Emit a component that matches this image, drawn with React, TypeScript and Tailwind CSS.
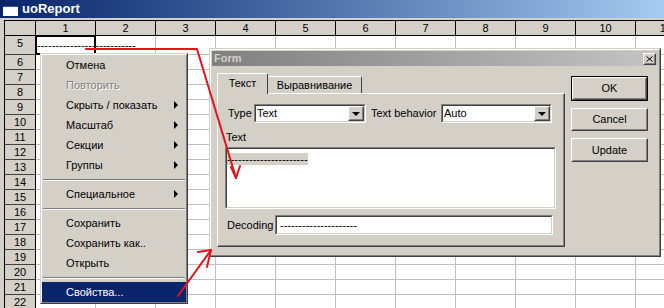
import React from "react";

const cols = [1, 2, 3, 4, 5, 6, 7, 8, 9, 10, 11];
const rows = Array.from({ length: 18 }, (_, i) => i + 5);

function Sunken({ className, children }: { className?: string; children?: React.ReactNode }) {
  return (
    <div className={"border border-t-[#808080] border-l-[#808080] border-r-white border-b-white " + (className ?? "")}>
      <div className="h-full w-full border border-t-[#404040] border-l-[#404040] border-r-[#d4d0c8] border-b-[#d4d0c8] bg-white">
        {children}
      </div>
    </div>
  );
}

function Raised({ className, children }: { className?: string; children?: React.ReactNode }) {
  return (
    <div className={"border border-t-white border-l-white border-r-[#404040] border-b-[#404040] " + (className ?? "")}>
      <div className="flex h-full w-full items-center justify-center border border-t-[#d4d0c8] border-l-[#d4d0c8] border-r-[#808080] border-b-[#808080] bg-[#d4d0c8]">
        {children}
      </div>
    </div>
  );
}

function Select({ value, className }: { value: string; className: string }) {
  return (
    <Sunken className={className}>
      <div className="flex h-full items-center">
        <span className="flex-1 pl-[1px] text-[11px] leading-[13px]">{value}</span>
        <Raised className="h-full w-[16px]">
          <span className="h-0 w-0 border-x-[4px] border-t-[4px] border-x-transparent border-t-black" />
        </Raised>
      </div>
    </Sunken>
  );
}

function MenuItem({ label, arrow, disabled, active }: { label: string; arrow?: boolean; disabled?: boolean; active?: boolean }) {
  return (
    <div
      className={
        active
          ? "flex h-[20px] items-center bg-[#0a246a] pl-[24px] pr-[8px] text-white"
          : "flex h-[20px] items-center pl-[24px] pr-[8px] text-black"
      }
    >
      <span className={disabled ? "text-[#808080] [text-shadow:1px_1px_0_#ffffff]" : ""}>{label}</span>
      {arrow && <span className="ml-auto h-0 w-0 border-y-[4px] border-l-[4px] border-y-transparent border-l-black" />}
    </div>
  );
}

function Sep() {
  return (
    <div className="flex h-[9px] flex-col justify-center px-[1px]">
      <div className="h-[1px] bg-[#808080]" />
      <div className="h-[1px] bg-white" />
    </div>
  );
}

export default function App() {
  return (
    <div className="relative h-[308px] w-[664px] overflow-hidden bg-[#d4d0c8] font-['Liberation_Sans',Arial,sans-serif] text-[11px] text-black">
      {/* title bar */}
      <div className="flex h-[18px] items-center bg-linear-to-r from-[#0a246a] to-[#a6caf0] pl-[3px]">
        <div className="mt-[3px] h-[10px] w-[15px] border-t-[1px] border-[#3a5a9a] bg-white" />
        <span className="ml-[4px] text-[13px] font-bold leading-[18px] text-white">uoReport</span>
      </div>
      <div className="h-[2px]" />

      {/* grid */}
      <div className="flex flex-col pl-[4px]">
        <div className="flex h-[16px] border-y border-black bg-[#d4d0c8]">
          <div className="w-[32px] shrink-0 border-x border-black" />
          {cols.map((c) => (
            <div key={c} className="w-[60px] shrink-0 border-r border-black text-center leading-[14px]">
              {c}
            </div>
          ))}
        </div>
        {rows.map((r) => (
          <div key={r} className={r === 5 ? "flex h-[19px]" : "flex h-[15px]"}>
            <div className="w-[32px] shrink-0 border-x border-b border-x-black border-b-[#404040] bg-[#d4d0c8] text-center leading-[14px]">
              {r}
            </div>
            {cols.map((c) =>
              r === 5 && c === 1 ? (
                <div key={c} className="relative w-[60px] shrink-0 border-r border-b border-[#c0c0c0] bg-white">
                  <span className="absolute left-[1px] top-0 z-10 whitespace-nowrap leading-[18px]">---------------------------</span>
                  <div className="absolute -left-[1px] -top-[1px] -right-[1px] -bottom-[1px] border-2 border-black" />
                </div>
              ) : (
                <div key={c} className="w-[60px] shrink-0 border-r border-b border-[#c0c0c0] bg-white" />
              )
            )}
          </div>
        ))}
      </div>

      {/* context menu */}
      <div className="absolute left-[40px] top-[53px] w-[148px] border border-t-[#d4d0c8] border-l-[#d4d0c8] border-r-[#404040] border-b-[#404040]">
        <div className="border border-t-white border-l-white border-r-[#808080] border-b-[#808080] bg-[#d4d0c8]">
          <MenuItem label="Отмена" />
          <MenuItem label="Повторить" disabled />
          <MenuItem label="Скрыть / показать" arrow />
          <MenuItem label="Масштаб" arrow />
          <MenuItem label="Секции" arrow />
          <MenuItem label="Группы" arrow />
          <Sep />
          <MenuItem label="Специальное" arrow />
          <Sep />
          <MenuItem label="Сохранить" />
          <MenuItem label="Сохранить как.." />
          <MenuItem label="Открыть" />
          <Sep />
          <MenuItem label="Свойства..." active />
        </div>
      </div>

      {/* dialog */}
      <div className="absolute left-[209px] top-[48px] h-[209px] w-[452px] border border-t-[#d4d0c8] border-l-[#d4d0c8] border-r-[#404040] border-b-[#404040]">
        <div className="flex h-full flex-col border border-t-white border-l-white border-r-[#808080] border-b-[#808080] bg-[#d4d0c8] p-[1px]">
          <div className="flex h-[15px] items-center bg-linear-to-r from-[#808080] to-[#c4c4c4] pl-[2px] pr-[2px]">
            <span className="text-[11px] font-bold leading-[15px] text-[#d4d0c8]">Form</span>
            <Raised className="ml-auto h-[12px] w-[13px]">
              <svg width="7" height="6" viewBox="0 0 7 6">
                <path d="M0.5 0.5 L6.5 5.5 M6.5 0.5 L0.5 5.5" stroke="black" strokeWidth="1" />
              </svg>
            </Raised>
          </div>
          <div className="flex pl-[5px] pt-[7px]">
            <div className="flex w-[348px] flex-col">
              <div className="flex h-[20px] items-end">
                <div className="relative z-10 -mb-[1px] flex h-[21px] w-[51px] items-center justify-center rounded-t-[2px] border-t border-l border-r border-t-white border-l-white border-r-[#404040] bg-[#d4d0c8] pb-[1px]">
                  Текст
                </div>
                <div className="flex h-[17px] w-[94px] items-center justify-center rounded-t-[2px] border-t border-r border-t-white border-r-[#404040] bg-[#d4d0c8]">
                  Выравнивание
                </div>
              </div>
              <div className="h-[154px] border border-t-white border-l-white border-r-[#404040] border-b-[#404040]">
                <div className="flex h-full flex-col border-r border-b border-r-[#808080] border-b-[#808080] px-[7px] pt-[10px]">
                  <div className="flex h-[19px] items-center pl-[3px]">
                    <span className="w-[26px]">Type</span>
                    <Select value="Text" className="h-[19px] w-[112px]" />
                    <span className="ml-[5px] w-[70px]">Text behavior</span>
                    <Select value="Auto" className="h-[19px] w-[111px]" />
                  </div>
                  <div className="mt-[8px] h-[13px] pl-[1px] leading-[13px]">Text</div>
                  <Sunken className="mt-[3px] h-[62px]">
                    <div className="pt-[2px]">
                      <span className="bg-[#d4d0c8] leading-[12px]">----------------------</span>
                    </div>
                  </Sunken>
                  <div className="mt-[6px] flex h-[20px] items-center pl-[2px]">
                    <span className="w-[48px]">Decoding</span>
                    <Sunken className="h-[20px] w-[278px]">
                      <div className="pl-[3px] leading-[16px]">---------------------</div>
                    </Sunken>
                  </div>
                </div>
              </div>
            </div>
            <div className="ml-[6px] flex flex-col pt-[3px]">
              <div className="h-[25px] w-[77px] border border-black">
                <Raised className="h-full w-full">OK</Raised>
              </div>
              <Raised className="mt-[7px] h-[23px] w-[77px]">Cancel</Raised>
              <Raised className="mt-[7px] h-[24px] w-[77px]">Update</Raised>
            </div>
          </div>
        </div>
      </div>

      {/* red arrows */}
      <svg className="pointer-events-none absolute left-0 top-0" width="664" height="308" viewBox="0 0 664 308">
        <g stroke="#e8101a" strokeWidth="2" fill="none" strokeLinecap="round" strokeLinejoin="round">
          <path d="M86 49 L197 49 L236 178" />
          <path d="M231 167 L236 178 L240 166" />
          <path d="M178 296 L211 250" />
          <path d="M198 252 L211 250 L207 267" />
        </g>
      </svg>
    </div>
  );
}
